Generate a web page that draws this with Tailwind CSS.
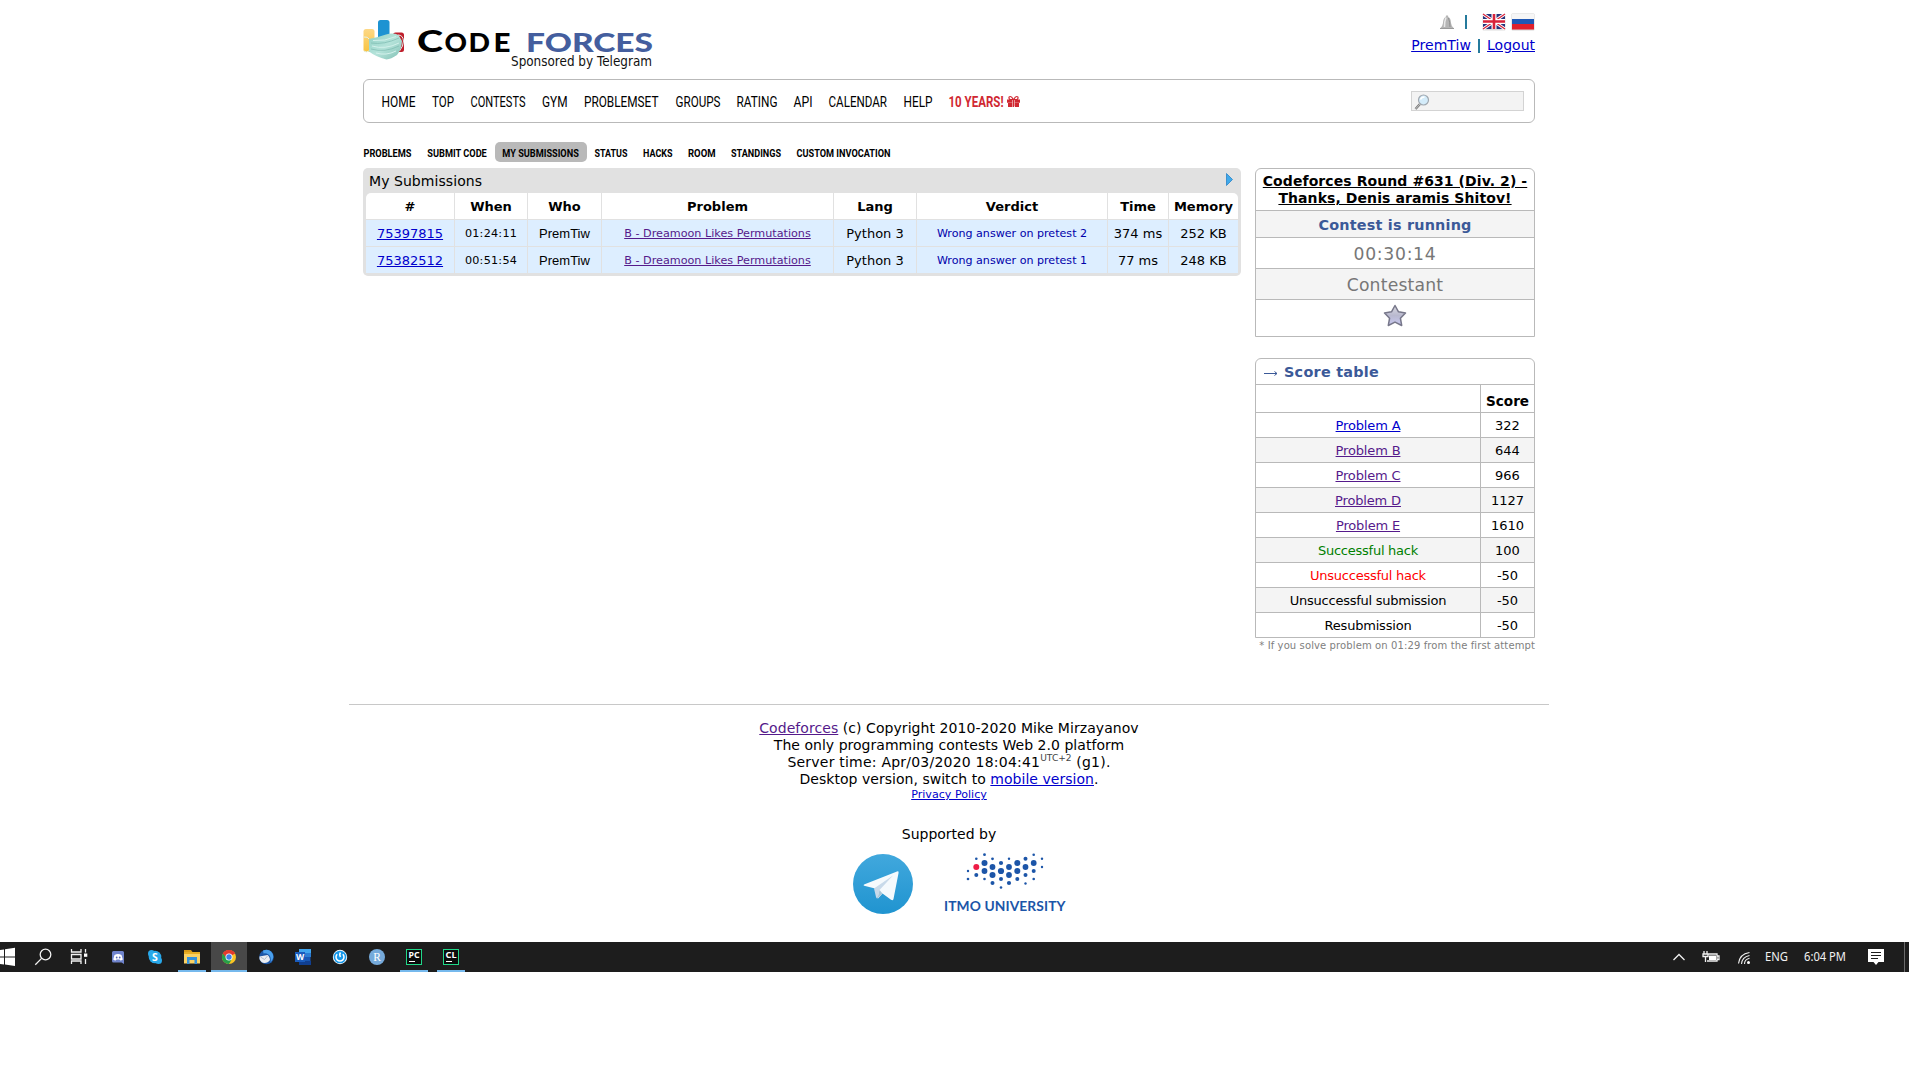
<!DOCTYPE html>
<html lang="en">
<head>
<meta charset="utf-8">
<title>My Submissions - Codeforces</title>
<script src="https://cdn.jsdelivr.net/npm/@tailwindcss/browser@4"></script>
</head>
<body class="bg-white text-black font-['Verdana','DejaVu_Sans',sans-serif] text-[14px] leading-[17px] h-[1080px] overflow-hidden">
<div class="h-[942px] overflow-hidden">
<div class="ml-[363px] w-[1172px]">
  <header class="flex justify-between h-[79px]">
    <svg class="w-[300px] h-[79px]" viewBox="363 0 300 79">
      <defs>
        <linearGradient id="mask" x1="0" y1="0" x2="1" y2="1"><stop offset="0" stop-color="#8fd0c4"/><stop offset=".5" stop-color="#b5e3da"/><stop offset="1" stop-color="#7fbfb3"/></linearGradient>
        <linearGradient id="yel" x1="0" y1="0" x2="0" y2="1"><stop offset="0" stop-color="#fdd886"/><stop offset="1" stop-color="#f9c440"/></linearGradient>
      </defs>
      <rect x="363.500" y="29" width="11" height="23" rx="2.500" fill="url(#yel)"/>
      <rect x="378" y="20" width="11.500" height="30" rx="2.500" fill="#1d93d2"/>
      <rect x="393" y="32.500" width="11" height="19.500" rx="2.500" fill="#bf1e2b"/>
      <path d="M364 37q4-.5 5 2M369 51q-3 2-5 0M398 35q5 0 5.500 6 0 5-4 10" fill="none" stroke="#e3f2ee" stroke-width="1"/>
      <path d="M369 39Q379 37 386 34.500Q393 32.500 398.500 35L402 41Q401.500 50 397 55Q391 59 386.500 59.500Q376 57 369 51.500Z" fill="url(#mask)"/>
      <path d="M371 43q13 2 28-5M371 49q14 4 28-3" fill="none" stroke="#7dbab0" stroke-width=".7"/>
      <path d="M373 40.500q12 1 23-4M372 46q13 4 27-3M376 53q10 3 20-2" fill="none" stroke="#d3f1eb" stroke-width="1"/>
      <g font-family="Lato, sans-serif" font-weight="900">
        <text x="417" y="51.500" font-size="31" textLength="26" lengthAdjust="spacingAndGlyphs">C</text>
        <text y="51.500" font-size="26"><tspan x="444.500" textLength="22.500" lengthAdjust="spacingAndGlyphs">O</tspan><tspan x="468.500" textLength="21.500" lengthAdjust="spacingAndGlyphs">D</tspan><tspan x="493.500" textLength="17" lengthAdjust="spacingAndGlyphs">E</tspan></text>
        <text x="526" y="51.500" font-size="26" textLength="127" lengthAdjust="spacingAndGlyphs" fill="#445e9e">FORCES</text>
      </g>
      <text x="511" y="66" font-size="13.500" font-family="DejaVu Sans, sans-serif" textLength="141" lengthAdjust="spacingAndGlyphs" fill="#111">Sponsored by Telegram</text>
    </svg>
    <div class="flex flex-col items-end pt-[12px]">
      <div class="flex items-center h-[20px]">
        <svg class="w-[16px] h-[17px]" viewBox="0 0 16 17"><path d="M7 1.500h2l.3 1.500q2.500 1 2.700 6 .2 3 3 5.500H1Q3.800 12 4 9q.2-5 2.700-6z" fill="#b5b5b5"/><path d="M7 3.500Q5.500 7 5.500 13" stroke="#e8e8e8" stroke-width="1.500" fill="none"/><path d="M9.500 4q1.500 4 1.500 9" stroke="#8f8f8f" fill="none"/><path d="M1 14.500h14" stroke="#9a9a9a" stroke-width="1"/></svg>
        <span class="w-[2px] h-[14px] bg-[#257a9c] ml-[10px] mr-[15px]"></span>
        <svg class="w-[24px] h-[18px] mr-[5px]" viewBox="0 0 24 18"><rect x=".5" y="1" width="23" height="16.500" rx="1" fill="#ddd"/><rect x="1" y="1" width="22" height="15" fill="#26337c"/><path d="M1 1l22 15M23 1L1 16" stroke="#fff" stroke-width="3.200"/><path d="M1 1l22 15M23 1L1 16" stroke="#d8223a" stroke-width="1.200"/><path d="M12 1v15M1 8.500h22" stroke="#fff" stroke-width="5"/><path d="M12 1v15M1 8.500h22" stroke="#d8223a" stroke-width="2.600"/></svg>
        <svg class="w-[24px] h-[18px]" viewBox="0 0 24 18"><rect x=".5" y=".5" width="23" height="17" rx="1" fill="#d5d5d5"/><path d="M1 1h22v5H1z" fill="#f6f6f6"/><path d="M1 6h22v5.500H1z" fill="#1f58b5"/><path d="M1 11h22v5.500H1z" fill="#e0202c"/></svg>
      </div>
      <div class="flex h-[17px] mt-[5px] items-center">
        <a class="underline text-[#0000cc] tracking-[0.080px]">PremTiw</a><span class="w-[2px] h-[14px] bg-[#257a9c] ml-[7px] mr-[7px]"></span><a class="underline text-[#0000cc]">Logout</a>
      </div>
    </div>
  </header>

  <nav class="flex items-center h-[44px] border border-[#b9b9b9] rounded-[6px] pl-[18px] pr-[10px]">
    <svg class="w-[644px] h-[42px]" viewBox="382 80 644 42" overflow="visible" font-family="Roboto, sans-serif" font-size="15.200">
      <text x="381.500" y="107" textLength="34" lengthAdjust="spacingAndGlyphs">HOME</text>
      <text x="432" y="107" textLength="22" lengthAdjust="spacingAndGlyphs">TOP</text>
      <text x="470.500" y="107" textLength="55" lengthAdjust="spacingAndGlyphs">CONTESTS</text>
      <text x="542" y="107" textLength="25.500" lengthAdjust="spacingAndGlyphs">GYM</text>
      <text x="584" y="107" textLength="74.500" lengthAdjust="spacingAndGlyphs">PROBLEMSET</text>
      <text x="675.500" y="107" textLength="45" lengthAdjust="spacingAndGlyphs">GROUPS</text>
      <text x="736.500" y="107" textLength="41" lengthAdjust="spacingAndGlyphs">RATING</text>
      <text x="793.500" y="107" textLength="19" lengthAdjust="spacingAndGlyphs">API</text>
      <text x="828.500" y="107" textLength="58.500" lengthAdjust="spacingAndGlyphs">CALENDAR</text>
      <text x="903.500" y="107" textLength="29" lengthAdjust="spacingAndGlyphs">HELP</text>
      <text x="948.500" y="107" textLength="55" lengthAdjust="spacingAndGlyphs" font-weight="700" fill="#d02832">10 YEARS!</text>
      <path d="M1007 99.500h5.200v3.300h-5.200zM1014.800 99.500h5.200v3.300h-5.200zM1008 103h4.200v4h-4.200zM1014.800 103h4.200v4h-4.200zM1012.700 100h1.600v7h-1.600z" fill="#d02832"/><path d="M1013.300 99.500q-1.500-3-3-3t-1.300 1.600 2 1.400zM1013.700 99.500q1.500-3 3-3t1.300 1.600-2 1.400z" fill="none" stroke="#d02832" stroke-width="1.200"/>
    </svg>
    <div class="ml-auto w-[113px] h-[20px] border border-[#d3d3d3] bg-[#f3f3f3] pl-[2px] pt-[1px]">
      <svg class="w-[16px] h-[17px]" viewBox="0 0 16 17"><path d="M6 11l-4.500 5" stroke="#777" stroke-width="2.400"/><path d="M6 11l-4.500 5" stroke="#ccc" stroke-width=".9"/><circle cx="9.500" cy="7" r="5" fill="#d4ecfa" stroke="#a0a8b0" stroke-width="1.200"/><path d="M6.500 6.500q1-2.500 4-2.500" stroke="#fff" stroke-width="1.500" fill="none"/></svg>
    </div>
  </nav>

  <div class="h-[45px] pt-[19px]">
    <svg class="w-[540px] h-[20px]" viewBox="363 142 540 20" font-family="Roboto, sans-serif" font-weight="700" font-size="11">
      <rect x="495" y="142" width="92" height="20" rx="5" fill="#b9b9b9"/>
      <text x="363.500" y="157" textLength="48" lengthAdjust="spacingAndGlyphs">PROBLEMS</text>
      <text x="427.300" y="157" textLength="59.500" lengthAdjust="spacingAndGlyphs">SUBMIT CODE</text>
      <text x="502.300" y="157" textLength="76.500" lengthAdjust="spacingAndGlyphs">MY SUBMISSIONS</text>
      <text x="594.500" y="157" textLength="33" lengthAdjust="spacingAndGlyphs">STATUS</text>
      <text x="643" y="157" textLength="29.500" lengthAdjust="spacingAndGlyphs">HACKS</text>
      <text x="688" y="157" textLength="27.500" lengthAdjust="spacingAndGlyphs">ROOM</text>
      <text x="731" y="157" textLength="50" lengthAdjust="spacingAndGlyphs">STANDINGS</text>
      <text x="796.500" y="157" textLength="94" lengthAdjust="spacingAndGlyphs">CUSTOM INVOCATION</text>
    </svg>
  </div>

  <div class="flex items-start gap-[14px] h-[536px]">
    <main class="w-[878px] bg-[#e1e1e1] rounded-[5px] px-[3px] pb-[3px]">
      <div class="flex justify-between items-center h-[25px] pl-[3px] pr-[5px]"><span class="pt-[2px] tracking-[0.060px]">My Submissions</span><svg class="w-[7px] h-[13px] mb-[3px]" viewBox="0 0 7 13"><path d="M.5.500L6.500 6.500L.5 12.500z" fill="#3fa9ea" stroke="#2a83c8" stroke-width=".8"/></svg></div>
      <div class="grid grid-cols-[88px_72px_73px_231px_82px_190px_60px_69px] auto-rows-[26px] gap-px text-[13px] text-center leading-[24px] rounded-t-[5px] overflow-hidden whitespace-nowrap *:pt-[2px] *:bg-[#ddeeff] [&>b]:bg-white">
        <b>#</b><b>When</b><b>Who</b><b>Problem</b><b>Lang</b><b>Verdict</b><b>Time</b><b>Memory</b>
        <div><a class="underline text-[#0000cc]">75397815</a></div><div class="text-[11.200px] tracking-[0.250px]">01:24:11</div><div class="font-['Liberation_Sans',sans-serif]">PremTiw</div><div class="text-[11.200px]"><a class="underline text-[#551a8b]">B - Dreamoon Likes Permutations</a></div><div>Python 3</div><div class="text-[11.100px] text-[#0000aa]">Wrong answer on pretest 2</div><div>374 ms</div><div>252 KB</div>
        <div><a class="underline text-[#0000cc]">75382512</a></div><div class="text-[11.200px] tracking-[0.250px]">00:51:54</div><div class="font-['Liberation_Sans',sans-serif]">PremTiw</div><div class="text-[11.200px]"><a class="underline text-[#551a8b]">B - Dreamoon Likes Permutations</a></div><div>Python 3</div><div class="text-[11.100px] text-[#0000aa]">Wrong answer on pretest 1</div><div>77 ms</div><div>248 KB</div>
      </div>
    </main>

    <aside class="w-[280px] text-center whitespace-nowrap">
      <section class="border border-[#b9b9b9] rounded-t-[6px] divide-y divide-[#b9b9b9] overflow-hidden">
        <div class="h-[42px] pt-[4px] font-bold underline tracking-[0.080px]">Codeforces Round #631 (Div. 2) -<br>Thanks, Denis aramis Shitov!</div>
        <div class="h-[27px] leading-[26px] pt-px bg-[#f4f4f4] font-bold text-[#3b5998] text-[14.400px] tracking-[0.200px]">Contest is running</div>
        <div class="h-[31px] leading-[30px] pt-px text-[#777] text-[17.200px] tracking-[0.700px]">00:30:14</div>
        <div class="h-[31px] leading-[30px] pt-px bg-[#f4f4f4] text-[#777] text-[17.200px] tracking-[0.200px]">Contestant</div>
        <div class="h-[36px] flex justify-center pt-[3px]"><svg class="w-[24px] h-[25px]" viewBox="0 0 24 25"><defs><linearGradient id="st" x1="0" y1="0" x2="0" y2="1"><stop offset="0" stop-color="#dadae0"/><stop offset=".5" stop-color="#b9b9cf"/><stop offset="1" stop-color="#c9c9f2"/></linearGradient></defs><path d="M12 2.500l3.500 6.300 7 1.200-5.100 5.200 1.300 7.300-6.700-3.400-6.700 3.400 1.300-7.300L1.500 10l7-1.200z" fill="url(#st)" stroke="#77778a" stroke-width="1.500" stroke-linejoin="round"/></svg></div>
      </section>
      <section class="mt-[21px] border border-[#b9b9b9] rounded-t-[6px] text-[13px]">
        <div class="h-[25px] leading-[26px] pl-[7px] flex gap-[5px] text-[#3b5998] font-bold text-[14.400px] tracking-[0.250px]"><svg class="w-[16px] h-[25px] shrink-0" viewBox="0 0 16 25"><path d="M1 14.500h13M11.500 12.500l2.500 2-2.500 2" fill="none" stroke="#3b5998" stroke-width="1"/></svg>Score table</div>
        <div class="grid grid-cols-[224px_53px] gap-px bg-[#b9b9b9] pt-px leading-[22px] *:pt-[2px] *:bg-white *:h-[24px]">
          <div class="h-[27px]!"></div><div class="h-[27px]! leading-[28px] font-bold text-[13.600px]">Score</div>
          <div><a class="underline text-[#0000cc] tracking-[-0.150px]">Problem A</a></div><div>322</div>
          <div class="bg-[#f4f4f4]!"><a class="underline text-[#551a8b] tracking-[-0.150px]">Problem B</a></div><div class="bg-[#f4f4f4]!">644</div>
          <div><a class="underline text-[#551a8b] tracking-[-0.150px]">Problem C</a></div><div>966</div>
          <div class="bg-[#f4f4f4]!"><a class="underline text-[#551a8b] tracking-[-0.150px]">Problem D</a></div><div class="bg-[#f4f4f4]!">1127</div>
          <div><a class="underline text-[#551a8b] tracking-[-0.150px]">Problem E</a></div><div>1610</div>
          <div class="bg-[#f4f4f4]! text-[#008000] tracking-[-0.250px]">Successful hack</div><div class="bg-[#f4f4f4]!">100</div>
          <div class="text-[#ff0000] tracking-[-0.250px]">Unsuccessful hack</div><div>-50</div>
          <div class="bg-[#f4f4f4]! tracking-[-0.250px]">Unsuccessful submission</div><div class="bg-[#f4f4f4]!">-50</div>
          <div class="tracking-[-0.200px]">Resubmission</div><div>-50</div>
        </div>
      </section>
      <p class="text-right text-[10px] leading-[14px] pt-px tracking-[0.110px] text-[#808080]">* If you solve problem on 01:29 from the first attempt</p>
    </aside>
  </div>
</div>

<footer class="ml-[349px] w-[1200px] border-t border-[#c8c8c8] text-center pt-[15px]">
  <p class="tracking-[0.060px]"><a class="underline text-[#551a8b]">Codeforces</a> (c) Copyright 2010-2020 Mike Mirzayanov</p>
  <p class="tracking-[0.030px]">The only programming contests Web 2.0 platform</p>
  <p class="flex justify-center tracking-[0.220px]">Server time: Apr/03/2020 18:04:41<span class="text-[9.100px] leading-[9px] tracking-normal text-[#444]">UTC+2</span>&nbsp;(g1).</p>
  <p class="tracking-[0.030px]">Desktop version, switch to <a class="underline text-[#0000cc]">mobile version</a>.</p>
  <p class="text-[11.100px] leading-[14px]"><a class="underline text-[#0000cc]">Privacy Policy</a></p>
  <p class="mt-[24px]">Supported by</p>
  <div class="mt-[11px] ml-[504px] flex gap-[30px]">
    <svg class="w-[60px] h-[60px]" viewBox="0 0 60 60"><defs><linearGradient id="tg" x1="0" y1="0" x2="0" y2="1"><stop offset="0" stop-color="#41a8dd"/><stop offset="1" stop-color="#2094d0"/></linearGradient></defs><circle cx="30" cy="30" r="30" fill="url(#tg)"/><path d="M11 30.500L44 17.500q1.800-.6 1.600 1.300L40.500 45q-.6 2-2.500.8L29.500 39.500 25 44.500l-1-9.500-12.800-3.300q-1.200-.5-.2-1.200z" fill="#f5fafd"/><path d="M21 34.500L40 21.500L26.500 36L24.500 44.500q-1 0-1.500-1.500z" fill="#c8daea"/><path d="M26.500 36l-2 8.500 5-5z" fill="#a9c6d8"/></svg>
    <svg class="w-[124px] h-[62px]" viewBox="943 854 124 62" overflow="visible">
      <g fill="#1c55a8">
        <g><circle cx="984.500" cy="863" r="3"/><circle cx="992.500" cy="867" r="2.900"/><circle cx="984.500" cy="871" r="2.900"/><circle cx="992.500" cy="875" r="3"/><circle cx="1001" cy="871" r="3.100"/><circle cx="1009" cy="867" r="2.900"/><circle cx="1009" cy="875" r="2.900"/><circle cx="1017.300" cy="863" r="3"/><circle cx="1017.300" cy="871" r="3"/><circle cx="1025.500" cy="867" r="2.900"/><circle cx="1033.700" cy="863" r="2.900"/></g>
        <g><circle cx="976.300" cy="875" r="2"/><circle cx="1001" cy="863" r="2.100"/><circle cx="1001" cy="879" r="2"/><circle cx="992.500" cy="883" r="2"/><circle cx="1009" cy="883" r="2.100"/><circle cx="1017.300" cy="879" r="2"/><circle cx="1025.500" cy="858.800" r="2"/><circle cx="1025.500" cy="875" r="2"/><circle cx="1033.700" cy="871" r="2"/></g>
        <g><circle cx="984.500" cy="854.700" r="1.400"/><circle cx="976.300" cy="858.800" r="1.300"/><circle cx="992.500" cy="858.800" r="1.400"/><circle cx="1009" cy="858.800" r="1.200"/><circle cx="1033.700" cy="854.700" r="1.300"/><circle cx="1042" cy="858.800" r="1.200"/><circle cx="1042" cy="867" r="1.200"/><circle cx="968" cy="871" r="1.200"/><circle cx="968" cy="879" r="1.300"/><circle cx="984.500" cy="879" r="1.300"/><circle cx="1001" cy="887.500" r="1.300"/><circle cx="1025.500" cy="883.500" r="1.200"/><circle cx="1033.700" cy="879" r="1.300"/></g>
        <text x="944" y="910.500" font-family="Lato, sans-serif" font-weight="700" font-size="13.800" textLength="121.500" lengthAdjust="spacing">ITMO UNIVERSITY</text>
      </g>
      <circle cx="976.300" cy="867" r="3" fill="#ee1b45"/>
    </svg>
  </div>
</footer>
</div>

<div class="w-[1909px] h-[30px] bg-[#1d1d1d]">
  <svg class="w-[1909px] h-[30px]" viewBox="0 942 1909 30" font-family="Noto Sans, sans-serif">
    <rect x="211" y="942" width="36" height="30" fill="#484848"/>
    <path d="M178 970h28v2h-28zM211 970h36v2h-36zM400 970h28v2h-28zM437 970h28v2h-28z" fill="#76b9ed"/>
    <path d="M0 950l4-.6v7H0zM5 949.300l10-1.500v8.600H5zM0 957.500h4v7l-4-.5zM5 957.500h10v8.400L5 964.600z" fill="#fff"/>
    <g fill="none" stroke="#f2f2f2" stroke-width="1.300"><circle cx="45.500" cy="954.500" r="5.300"/><path d="M41.600 958.400L35.300 964.700"/><path d="M71.500 949v3h9.500v-3M71.500 964v-3h9.500v3M71.500 954.500h9.500v4.500h-9.500zM85.500 949v3.500M85.500 959v5"/></g><path d="M84 953.500h3.300v3.300H84z" fill="#fff"/>
    <path d="M113.500 951h9q1.500 0 1.500 1.500V964l-2.500-1.500h-8q-1.500 0-1.500-1.500v-8.500q0-1.500 1.500-1.500z" fill="#7084cc"/><path d="M114.500 955q3.500-1.800 7 0l1.300 4.500q-1 1-2.500 1l-.8-1h-3l-.8 1q-1.500 0-2.500-1z" fill="#fff"/><circle cx="116.700" cy="957.500" r=".9" fill="#5a6cb5"/><circle cx="119.700" cy="957.500" r=".9" fill="#5a6cb5"/>
    <circle cx="155" cy="957" r="6.300" fill="#28a8ea"/><circle cx="151.500" cy="953.500" r="3.500" fill="#28a8ea"/><circle cx="158.500" cy="960.500" r="3.500" fill="#28a8ea"/><text x="155" y="961" font-size="10.500" font-weight="700" fill="#fff" text-anchor="middle">S</text>
    <path d="M184 950h7l1.500 2h-8.500z" fill="#d99a17"/><path d="M184 952h16v11.500h-16z" fill="#fbd264"/><path d="M184 952h16v2h-16z" fill="#e9ae24"/><path d="M187 964v-7h10v7h-2.500v-4h-5v4z" fill="#3592dc"/>
    <circle cx="229" cy="957" r="7" fill="#fbc423"/><path d="M229 957L222.900 953.500A7 7 0 0 1 235.100 953.500z" fill="#e33b2e"/><path d="M229 957L222.900 953.500A7 7 0 0 0 229 964l3.200-5.500z" fill="#27a049"/><path d="M229 953.500h6.100A7 7 0 0 0 222.900 953.500l3.200 4z" fill="#e33b2e"/><circle cx="229" cy="957" r="3.500" fill="#fff"/><circle cx="229" cy="957" r="2.700" fill="#3f7fe8"/>
    <circle cx="266.500" cy="957" r="7.300" fill="#1c56a6"/><path d="M263 950.500q5-2 8 1 3.500 4 1.500 8l-2 3q1-6-2-8t-5-1z" fill="#4aa0ec"/><path d="M259.500 956.500l8-1.500q2 1 2.500 5-2 3-5.500 3t-5-4z" fill="#eceef2"/><path d="M260.500 957l4 2.500 3-3.500" stroke="#9fb0c4" fill="none" stroke-width=".8"/>
    <path d="M299 949h11.500v16H299z" fill="#1858b5"/><path d="M299 949h12v4h-12z" fill="#41a5ee"/><path d="M299 953h12v4h-12z" fill="#2b7cd3"/><path d="M299 961h12v4h-12z" fill="#103f91"/><path d="M295 952h10v10h-10z" fill="#1a5cbd"/><text x="300" y="960.300" font-size="8.500" font-weight="700" fill="#fff" text-anchor="middle">W</text>
    <circle cx="340" cy="957" r="7.200" fill="#f4f9fd"/><circle cx="340" cy="957" r="6.300" fill="#1698ea"/><path d="M337.200 954.200a4 4 0 1 0 5.600 0M340.500 952.500q-1.500 2 0 4.500" fill="none" stroke="#fff" stroke-width="1.500"/>
    <circle cx="377" cy="957" r="8" fill="#75aadb"/><text x="377" y="961.200" font-size="11.500" font-family="Liberation Serif, serif" fill="#fff" text-anchor="middle">R</text>
    <g stroke="#21d789" fill="#0b0b0b"><rect x="406.500" y="949.500" width="15" height="15"/><rect x="443.500" y="949.500" width="15" height="15"/></g>
    <g fill="#fff" font-weight="700" font-size="8"><text x="408.500" y="958" textLength="11" lengthAdjust="spacingAndGlyphs">PC</text><text x="445.500" y="958" textLength="11" lengthAdjust="spacingAndGlyphs">CL</text><path d="M409 961h6v1h-6zM446 961h6v1h-6z"/></g>
    <g fill="none" stroke="#f0f0f0" stroke-width="1.300"><path d="M1673.500 960l5.500-5.500 5.500 5.500"/><path d="M1707.500 954h9.500v7h-10M1717.500 956h1.500v3.500h-1.500M1704 951v3M1707 951v3M1703 954h5v2.500h-5zM1705.500 956v6"/><path d="M1738.500 963.500q1-9.500 11-11M1741.500 964q.5-7 8-8.500M1744.500 964q0-4.500 5-5.700" stroke-width="1.100"/></g><path d="M1709 955.500h7v4.500h-7z" fill="#fff"/><circle cx="1748.500" cy="962.500" r="1.500" fill="#fff"/>
    <g fill="#f2f2f2" font-size="12"><text x="1765" y="961.200" textLength="23" lengthAdjust="spacingAndGlyphs">ENG</text><text x="1804" y="961.200" textLength="42" lengthAdjust="spacingAndGlyphs">6:04 PM</text></g>
    <path d="M1868 949h16v13h-5.500l-2.500 3-2.500-3h-5.500z" fill="#fff"/><path d="M1871 952.500h10M1871 955.500h10M1871 958.500h7" stroke="#1d1d1d"/>
    <path d="M1904.500 942v30" stroke="#6a6a6a"/>
  </svg>
</div>
</body>
</html>
